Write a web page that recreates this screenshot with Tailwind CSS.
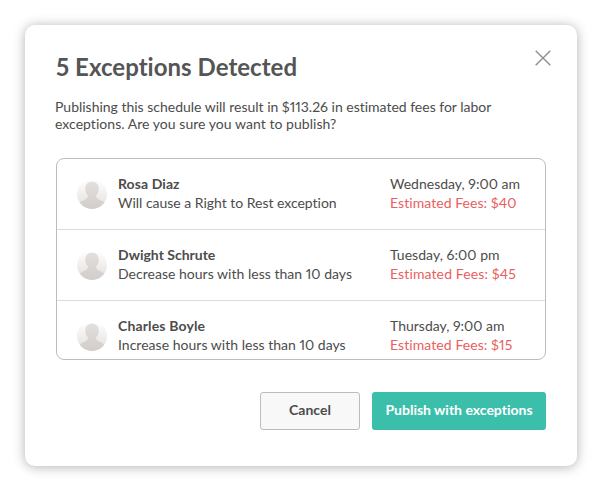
<!DOCTYPE html>
<html lang="en">

    <head>
        <meta charset="UTF-8">
        <meta name="viewport" content="width=device-width, initial-scale=1.0">
        <title>Publish Schedule</title>
        <script src="https://cdn.jsdelivr.net/npm/@tailwindcss/browser@4"></script>
    </head>

    <body class="min-h-screen bg-white p-[25px] font-['Lato',sans-serif] text-sm proportional-nums text-[#4c4c4c] [font-variant-ligatures:none] overflow-hidden">
        <!-- Avatar shared by every row -->
        <svg class="absolute size-0">
            <defs>
                <linearGradient id="avatarBg" x1="0" y1="0" x2="0" y2="1">
                    <stop offset="0" stop-color="#ffffff" />
                    <stop offset="1" stop-color="#e2dfdd" />
                </linearGradient>
                <linearGradient id="avatarFg" x1="0" y1="0" x2="0" y2="1">
                    <stop offset="0" stop-color="#e2dfdd" />
                    <stop offset="1" stop-color="#d2cdca" />
                </linearGradient>
                <clipPath id="avatarClip">
                    <circle cx="15" cy="15" r="15" />
                </clipPath>
            </defs>
            <symbol id="avatar" viewBox="0 0 30 30">
                <g clip-path="url(#avatarClip)">
                    <rect width="30" height="30" fill="url(#avatarBg)" />
                    <path fill="url(#avatarFg)" d="M15 2.800c-4.200 0-6.700 2.600-6.700 6.600 0 3.200 1 5.600 2.600 7.200 0 1.800-.6 2.900-2.700 3.900-2.600 1.200-5 2-6.700 4V30h27v-5.500c-1.700-2-4.100-2.800-6.700-4-2.100-1-2.700-2.100-2.700-3.900 1.600-1.600 2.600-4 2.600-7.200 0-4-2.500-6.600-6.700-6.600z" />
                </g>
            </symbol>
        </svg>

        <div class="w-[552px] h-[441px] rounded-[10px] bg-white px-[31px] shadow-[0_1px_12px_rgba(60,60,75,0.4)]">
            <div class="flex justify-between pt-[25px]">
                <h2 class="text-2xl leading-[34px] font-bold tracking-[0.03px] whitespace-nowrap text-[#555555]">5 Exceptions Detected</h2>
                <button type="button" class="size-4 mr-[-5px]" aria-label="Close">
                    <svg class="size-4" viewBox="0 0 16 16" fill="none" stroke="#8f8f8f" stroke-width="1.4">
                        <path d="M.7.7l14.600 14.600M15.300.7L.7 15.300" />
                    </svg>
                </button>
            </div>

            <p class="-ml-px mt-[14px] leading-[17px] whitespace-nowrap">
                <span class="tracking-[-0.01px]">Publishing this schedule will result in $113.26 in estimated fees for labor</span><br>
                <span class="tracking-[0.04px]">exceptions. Are you sure you want to publish?</span>
            </p>

            <!-- Exception list -->
            <div class="mt-[26px] h-[202px] w-[490px] overflow-hidden rounded-lg border border-[#bcbcbc] leading-[19px] whitespace-nowrap">
                <div class="flex h-[71px] items-center border-b border-[#dcdcdc] pb-px pl-5">
                    <svg class="size-[30px]"><use href="#avatar" /></svg>
                    <div class="ml-[11px] w-[272px] pb-px">
                        <div class="font-bold tracking-[0.08px]">Rosa Diaz</div>
                        <div class="tracking-[-0.02px]">Will cause a Right to Rest exception</div>
                    </div>
                    <div class="pb-px">
                        <div>Wednesday, 9:00 am</div>
                        <div class="tracking-[0.06px] text-[#e8605f]">Estimated Fees: $40</div>
                    </div>
                </div>
                <div class="flex h-[71px] items-center border-b border-[#dcdcdc] pb-px pl-5">
                    <svg class="size-[30px]"><use href="#avatar" /></svg>
                    <div class="ml-[11px] w-[272px] pb-px">
                        <div class="font-bold">Dwight Schrute</div>
                        <div class="tracking-[0.02px]">Decrease hours with less than 10 days</div>
                    </div>
                    <div class="pb-px">
                        <div class="tracking-[0.04px]">Tuesday, 6:00 pm</div>
                        <div class="tracking-[0.12px] text-[#e8605f]">Estimated Fees: $45</div>
                    </div>
                </div>
                <div class="flex h-[71px] items-center border-b border-[#dcdcdc] pb-px pl-5">
                    <svg class="size-[30px]"><use href="#avatar" /></svg>
                    <div class="ml-[11px] w-[272px] pb-px">
                        <div class="font-bold tracking-[0.15px]">Charles Boyle</div>
                        <div class="tracking-[0.02px]">Increase hours with less than 10 days</div>
                    </div>
                    <div class="pb-px">
                        <div>Thursday, 9:00 am</div>
                        <div class="tracking-[0.08px] text-[#e8605f]">Estimated Fees: $15</div>
                    </div>
                </div>
            </div>

            <!-- Actions -->
            <div class="mt-8 flex w-[490px] justify-end gap-3 font-bold">
                <button type="button" class="h-[38px] w-[100px] rounded-[3px] border border-[#bcbcbc] bg-[#f8f8f8] pb-0.5">Cancel</button>
                <button type="button" class="h-[38px] w-[174px] rounded-[3px] bg-[#3bbfab] pb-0.5 whitespace-nowrap text-white">Publish with exceptions</button>
            </div>
        </div>
    </body>

</html>
